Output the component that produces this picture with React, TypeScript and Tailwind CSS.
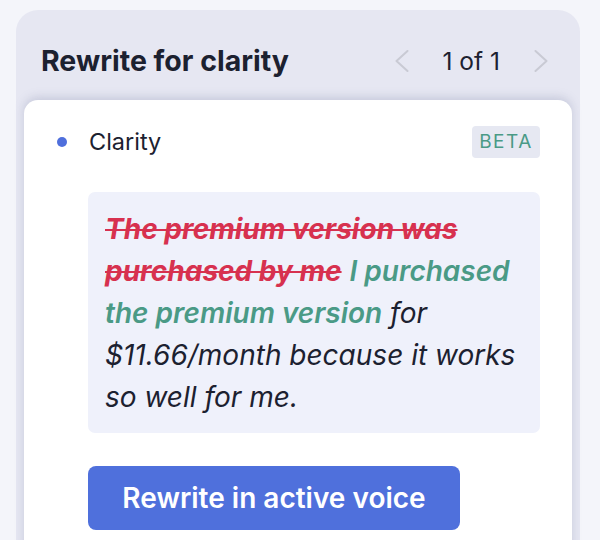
function Chevron({ dir }: { dir: "left" | "right" }) {
  return (
    <svg width="14" height="22" viewBox="0 0 14 22" fill="none" className="text-[#c9cad4]">
      <polyline
        points={dir === "left" ? "12.5,1 1.5,11 12.5,21" : "1.5,1 12.5,11 1.5,21"}
        stroke="currentColor"
        strokeWidth="2"
        strokeLinecap="round"
        strokeLinejoin="round"
      />
    </svg>
  );
}

export default function App() {
  return (
    <div
      className="h-[540px] w-[600px] overflow-hidden bg-[#f4f5fa] pl-4 pr-5 pt-[10px]"
      style={{ fontFamily: "Inter, 'Noto Sans', sans-serif" }}
    >
      <div className="h-[560px] rounded-[22px] bg-[#e6e7f2] px-2">
        <div className="flex h-[90px] items-center justify-between pl-[17px] pr-[24px] pt-[12px]">
          <h2 className="text-[28.5px] font-bold text-[#1c2130]">Rewrite for clarity</h2>
          <div className="flex items-center gap-[34px]">
            <Chevron dir="left" />
            <span className="text-[24.5px] text-[#1c2130]">1 of 1</span>
            <Chevron dir="right" />
          </div>
        </div>
        <div className="h-[460px] rounded-[14px] bg-white pl-[64px] pr-[32px] pt-[26px] shadow-[0_-3px_10px_rgba(120,124,160,0.28)]">
          <div className="-ml-[31px] flex h-[32px] items-center justify-between">
            <div className="flex items-center gap-[22px]">
              <span className="h-[10px] w-[10px] rounded-full bg-[#4f6fdc]" />
              <span className="text-[23.5px] text-[#1c2130]">Clarity</span>
            </div>
            <span className="flex h-[32px] w-[68px] items-center justify-center rounded-[4px] bg-[#e6e8f2] text-[19px] tracking-[0.08em] text-[#4a9a86]">
              BETA
            </span>
          </div>
          <div className="mt-[34px] rounded-[7px] bg-[#eff1fb] pb-[15px] pl-[17px] pr-[14px] pt-[16px] text-[28px] italic leading-[42px] text-[#1c2130]">
            <span className="font-bold text-[#d7314f] line-through">
              The premium version was purchased by me
            </span>{" "}
            <span className="font-semibold text-[#4a9a86]">I purchased the premium version</span> for
            $11.66/month because it works so well for me.
          </div>
          <button className="mt-[33px] h-[64px] w-[372px] rounded-[8px] bg-[#4f70dc] text-[28px] font-semibold text-white">
            Rewrite in active voice
          </button>
        </div>
      </div>
    </div>
  );
}
